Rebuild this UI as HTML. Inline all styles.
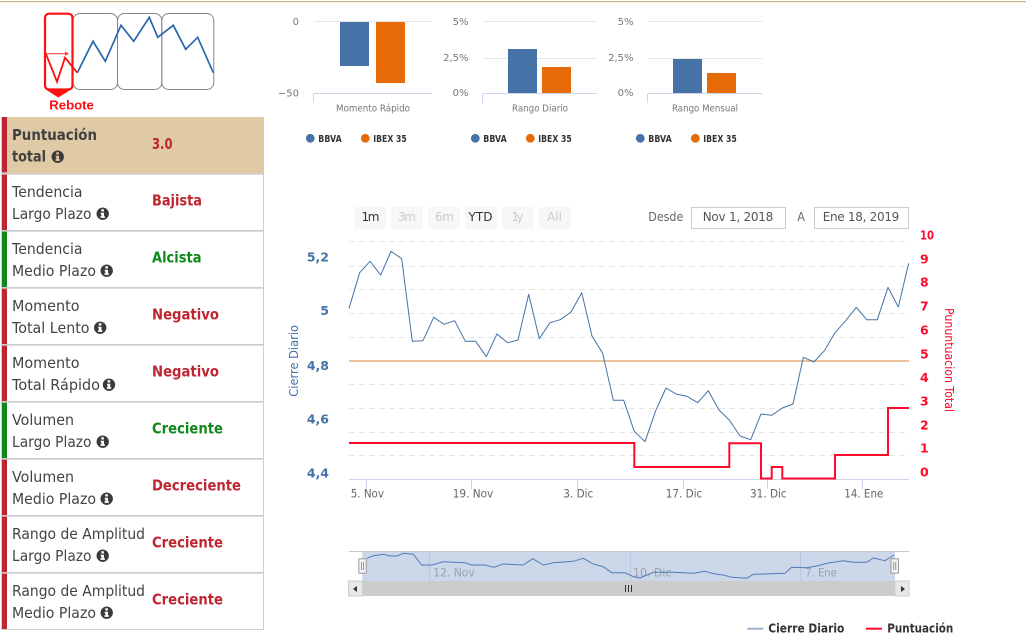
<!DOCTYPE html>
<html lang="es"><head><meta charset="utf-8"><title>Rebote</title>
<style>
html,body{margin:0;padding:0;background:#fff;width:1026px;height:643px;overflow:hidden}
svg{display:block}
text{font-family:"DejaVu Sans","Liberation Sans",sans-serif}
.r{font-size:15px;fill:#444}
.v{font-size:15.5px;font-weight:bold}
.red{fill:#bf2632}.grn{fill:#10891c}
.t{font-size:10px;fill:#666}
.c{font-size:10px;fill:#777}
.y{font-size:10px;fill:#777}
.l{font-size:10px;font-weight:bold;fill:#333}
.x{font-size:11.5px;fill:#666}
.b{font-size:12px}
.rx{font-size:12.5px;font-weight:bold;fill:#ff0a2a}
.lx{font-size:12.5px;font-weight:bold;fill:#4572a7}
</style></head><body>
<svg width="1026" height="643" viewBox="0 0 1026 643" xmlns="http://www.w3.org/2000/svg">
<defs>
<g id="i"><path fill="#3a3a3a" fill-rule="evenodd" d="M0-6.2a6.2 6.2 0 1 0 .01 0zM-1.4-4.4h2.6v2.2h-2.6zM-2-.9h3.3v3.5h.9v1.6h-4.4v-1.6h.9v-1.9h-.7z"/></g>
</defs>
<rect x="0" y="1" width="1026" height="1.2" fill="#c9b07e"/>

<!-- logo -->
<g fill="none" stroke="#858585" stroke-width="1">
<rect x="73" y="13.5" width="44.5" height="76" rx="7"/>
<rect x="117.5" y="13.5" width="44.3" height="76" rx="7"/>
<rect x="161.8" y="13.5" width="52" height="76" rx="7"/>
</g>
<polyline fill="none" stroke="#2a66ad" stroke-width="1.7" points="77.3,72.7 93,41.3 105.3,61.3 121,25.3 133.7,41.3 149.3,17.3 157.7,37.3 173.3,25.3 185.7,49.3 197.7,37.3 213.3,72.7"/>
<rect x="45" y="13.7" width="27.5" height="75.8" rx="4" fill="none" stroke="#ff0f0f" stroke-width="2.2"/>
<polygon points="45,89 72,89 58.3,97.5" fill="#ff0f0f"/>
<polyline fill="none" stroke="#ff0f0f" stroke-width="1.8" points="45.7,53.3 57,81.7 65,57.7 77.3,72.7"/>
<path d="M45.7 53.7H66" stroke="#ff3333" stroke-width="1"/><polygon points="65,51.6 69,53.7 65,55.8" fill="#ff3333"/>
<text x="49.3" y="109.5" style="font-family:'Liberation Sans',Arial,sans-serif;font-size:12.5px;font-weight:bold;fill:#ff0f0f" textLength="44.5" lengthAdjust="spacingAndGlyphs">Rebote</text>

<!-- table -->
<rect x="7" y="117" width="256.5" height="56.5" fill="#dfcaa5"/>
<g fill="#bf2632">
<rect x="2" y="117" width="5" height="55.5"/><rect x="2" y="174.5" width="5" height="55.5"/><rect x="2" y="288.5" width="5" height="55.5"/><rect x="2" y="345.5" width="5" height="55.5"/><rect x="2" y="459.5" width="5" height="55.5"/><rect x="2" y="516.5" width="5" height="55.5"/><rect x="2" y="573.5" width="5" height="55.5"/>
</g>
<g fill="#10891c"><rect x="2" y="231.5" width="5" height="55.5"/><rect x="2" y="402.5" width="5" height="55.5"/></g>
<g fill="#cccccc">
<rect x="1" y="173" width="263" height="1.7"/><rect x="1" y="230" width="263" height="1.7"/><rect x="1" y="287" width="263" height="1.7"/><rect x="1" y="344" width="263" height="1.7"/><rect x="1" y="401" width="263" height="1.7"/><rect x="1" y="458" width="263" height="1.7"/><rect x="1" y="515" width="263" height="1.7"/><rect x="1" y="572" width="263" height="1.7"/><rect x="1" y="629" width="263" height="1"/>
<rect x="263" y="117" width="1" height="513"/><rect x="1" y="117" width="1" height="513"/>
</g>

<text class="r" x="12" y="140" style="font-weight:bold;fill:#404040" textLength="85" lengthAdjust="spacingAndGlyphs">Puntuación</text>
<text class="r" x="12" y="161.7" style="font-weight:bold;fill:#404040" textLength="34" lengthAdjust="spacingAndGlyphs">total</text>
<use href="#i" x="57.7" y="156.7"/>
<text class="v red" x="152" y="149" textLength="20.5" lengthAdjust="spacingAndGlyphs">3.0</text>

<text class="r" x="12" y="197" textLength="70.5" lengthAdjust="spacingAndGlyphs">Tendencia</text>
<text class="r" x="12" y="219" textLength="79.5" lengthAdjust="spacingAndGlyphs">Largo Plazo</text>
<use href="#i" x="102.7" y="213.7"/>
<text class="v red" x="152" y="205.7" textLength="50" lengthAdjust="spacingAndGlyphs">Bajista</text>

<text class="r" x="12" y="254" textLength="70.5" lengthAdjust="spacingAndGlyphs">Tendencia</text>
<text class="r" x="12" y="276" textLength="84" lengthAdjust="spacingAndGlyphs">Medio Plazo</text>
<use href="#i" x="106.7" y="270.7"/>
<text class="v grn" x="152" y="262.7" textLength="49.5" lengthAdjust="spacingAndGlyphs">Alcista</text>

<text class="r" x="12" y="311" textLength="67.5" lengthAdjust="spacingAndGlyphs">Momento</text>
<text class="r" x="12" y="333" textLength="77.5" lengthAdjust="spacingAndGlyphs">Total Lento</text>
<use href="#i" x="100.2" y="327.7"/>
<text class="v red" x="152" y="319.7" textLength="67" lengthAdjust="spacingAndGlyphs">Negativo</text>

<text class="r" x="12" y="368" textLength="67.5" lengthAdjust="spacingAndGlyphs">Momento</text>
<text class="r" x="12" y="390" textLength="88" lengthAdjust="spacingAndGlyphs">Total Rápido</text>
<use href="#i" x="109" y="384.7"/>
<text class="v red" x="152" y="376.7" textLength="67" lengthAdjust="spacingAndGlyphs">Negativo</text>

<text class="r" x="12" y="425" textLength="62" lengthAdjust="spacingAndGlyphs">Volumen</text>
<text class="r" x="12" y="447" textLength="79.5" lengthAdjust="spacingAndGlyphs">Largo Plazo</text>
<use href="#i" x="102.7" y="441.7"/>
<text class="v grn" x="152" y="433.7" textLength="71" lengthAdjust="spacingAndGlyphs">Creciente</text>

<text class="r" x="12" y="482" textLength="62" lengthAdjust="spacingAndGlyphs">Volumen</text>
<text class="r" x="12" y="504" textLength="84" lengthAdjust="spacingAndGlyphs">Medio Plazo</text>
<use href="#i" x="106.7" y="498.7"/>
<text class="v red" x="152" y="490.7" textLength="89" lengthAdjust="spacingAndGlyphs">Decreciente</text>

<text class="r" x="12" y="539" textLength="133" lengthAdjust="spacingAndGlyphs">Rango de Amplitud</text>
<text class="r" x="12" y="561" textLength="79.5" lengthAdjust="spacingAndGlyphs">Largo Plazo</text>
<use href="#i" x="102.7" y="555.7"/>
<text class="v red" x="152" y="547.7" textLength="71" lengthAdjust="spacingAndGlyphs">Creciente</text>

<text class="r" x="12" y="596" textLength="133" lengthAdjust="spacingAndGlyphs">Rango de Amplitud</text>
<text class="r" x="12" y="618" textLength="84" lengthAdjust="spacingAndGlyphs">Medio Plazo</text>
<use href="#i" x="106.7" y="612.7"/>
<text class="v red" x="152" y="604.7" textLength="71" lengthAdjust="spacingAndGlyphs">Creciente</text>

<!-- mini charts -->
<g stroke="#e6e6e6" stroke-width="1">
<path d="M314 21.5H432M483 21.5H597M483 58.5H597M648 21.5H762M648 58.5H762"/>
</g>
<g stroke="#ccd6eb" stroke-width="1" fill="none">
<path d="M314 93.5H432M313.5 93.5V103M483 93.5H597M482.5 93.5V103M648 93.5H762M647.5 93.5V103"/>
</g>
<g fill="#4572a7">
<rect x="340" y="22" width="29" height="44"/><rect x="508" y="49" width="29" height="44"/><rect x="673" y="59" width="29" height="34"/>
<circle cx="310.3" cy="138.3" r="4.4"/><circle cx="475.3" cy="138.3" r="4.4"/><circle cx="640.3" cy="138.3" r="4.4"/>
</g>
<g fill="#e66a05">
<rect x="376" y="22" width="29" height="61"/><rect x="542" y="67" width="29" height="26"/><rect x="707" y="73" width="29" height="20"/>
<circle cx="365.3" cy="138.3" r="4.4"/><circle cx="530.3" cy="138.3" r="4.4"/><circle cx="695.3" cy="138.3" r="4.4"/>
</g>
<g class="y" text-anchor="end">
<text class="y" x="299" y="25">0</text><text class="y" x="299" y="96.5">−50</text>
<text class="y" x="468.5" y="25">5%</text><text class="y" x="468.5" y="61">2,5%</text><text class="y" x="468.5" y="96">0%</text>
<text class="y" x="633.5" y="25">5%</text><text class="y" x="633.5" y="61">2,5%</text><text class="y" x="633.5" y="96">0%</text>
</g>
<text class="c" x="336" y="111.5" textLength="74" lengthAdjust="spacingAndGlyphs">Momento Rápido</text>
<text class="c" x="512" y="111.5" textLength="56" lengthAdjust="spacingAndGlyphs">Rango Diario</text>
<text class="c" x="672" y="111.5" textLength="66" lengthAdjust="spacingAndGlyphs">Rango Mensual</text>
<text class="l" x="318.3" y="142" textLength="23.4" lengthAdjust="spacingAndGlyphs">BBVA</text>
<text class="l" x="373.3" y="142" textLength="33.4" lengthAdjust="spacingAndGlyphs">IBEX 35</text>
<text class="l" x="483.3" y="142" textLength="23.4" lengthAdjust="spacingAndGlyphs">BBVA</text>
<text class="l" x="538.3" y="142" textLength="33.4" lengthAdjust="spacingAndGlyphs">IBEX 35</text>
<text class="l" x="648.3" y="142" textLength="23.4" lengthAdjust="spacingAndGlyphs">BBVA</text>
<text class="l" x="703.3" y="142" textLength="33.4" lengthAdjust="spacingAndGlyphs">IBEX 35</text>

<!-- range selector -->
<g fill="#f7f7f7">
<rect x="354" y="207" width="32" height="22" rx="2"/><rect x="391" y="207" width="32" height="22" rx="2"/><rect x="428" y="207" width="32" height="22" rx="2"/><rect x="465" y="207" width="32" height="22" rx="2"/><rect x="502" y="207" width="32" height="22" rx="2"/><rect x="539" y="207" width="32" height="22" rx="2"/>
</g>
<text class="b" x="361.5" y="221" fill="#333" textLength="18" lengthAdjust="spacing">1m</text>
<text class="b" x="398" y="221" fill="#ccc" textLength="18" lengthAdjust="spacing">3m</text>
<text class="b" x="435" y="221" fill="#ccc" textLength="19" lengthAdjust="spacing">6m</text>
<text class="b" x="468.5" y="221" fill="#333" textLength="24" lengthAdjust="spacingAndGlyphs">YTD</text>
<text class="b" x="511.5" y="221" fill="#ccc" textLength="12" lengthAdjust="spacing">1y</text>
<text class="b" x="547" y="221" fill="#ccc" textLength="15" lengthAdjust="spacingAndGlyphs">All</text>
<text class="b" x="648.3" y="221" fill="#666" textLength="35" lengthAdjust="spacingAndGlyphs">Desde</text>
<rect x="691.5" y="207.5" width="94" height="21" fill="#fff" stroke="#ccc"/>
<text class="b" x="702.7" y="221" fill="#555" textLength="70.6" lengthAdjust="spacing">Nov 1, 2018</text>
<text class="b" x="797.3" y="221" fill="#666" textLength="7.7" lengthAdjust="spacingAndGlyphs">A</text>
<rect x="814.5" y="207.5" width="94" height="21" fill="#fff" stroke="#ccc"/>
<text class="b" x="822.7" y="221" fill="#555" textLength="76.6" lengthAdjust="spacing">Ene 18, 2019</text>

<!-- main chart grid -->
<path d="M349 241.5H909M349 266.5H909M349 289.5H909M349 313.5H909M349 337.5H909M349 384.5H909M349 408.5H909M349 432.5H909M349 455.5H909" stroke="#e6e6e6" stroke-width="1" stroke-dasharray="6 4" fill="none"/>
<path d="M349 479.5H909M366.5 479.5V489M471.5 479.5V489M577.5 479.5V489M683.5 479.5V489M767.5 479.5V489M862.5 479.5V489" stroke="#ccd6eb" stroke-width="1" fill="none"/>
<path d="M349 361H909" stroke="#ebb78c" stroke-width="1.8" fill="none"/>
<polyline fill="none" stroke="#4572a7" stroke-width="1" stroke-linejoin="round" points="349,308.3 359.7,272.7 370,261.3 380.7,275 391,251.3 401.7,258.7 412.3,341.3 423,340.7 433.7,317.3 444,324.3 454.7,320.7 465.3,341.3 475.7,341.3 486.3,356.7 497,334 507.7,342.7 518,340 528.7,294.3 539.3,338.7 550,322.7 560.3,319.7 571,312 581.7,292.7 592,336 602.7,353.3 613.3,400.3 623.7,400.3 634.3,431.3 645,441.7 655.7,410.7 666,388 676.7,394.3 687,396.3 697.7,402.7 708.3,390.7 719,410 729.3,420 740,436 750.7,439.7 761,414 771.7,415.3 782.3,408 793,404 803.3,357.3 814,362 824.7,350.3 835,332.7 845.7,320.7 856.3,307.3 866.7,319.7 877.3,319.7 888,287.3 898.3,307 908.7,263.3"/>
<polyline fill="none" stroke="#ff0a2a" stroke-width="2" points="349,443 634.3,443 634.3,467 729.3,467 729.3,443.3 761,443.3 761,478.5 771.7,478.5 771.7,467 782.3,467 782.3,478.5 835,478.5 835,455 888,455 888,408 909,408"/>

<!-- axes labels -->
<g text-anchor="end">
<text class="lx" x="329" y="261.3">5,2</text><text class="lx" x="329" y="315">5</text><text class="lx" x="329" y="370">4,8</text><text class="lx" x="329" y="423.3">4,6</text><text class="lx" x="329" y="477.3">4,4</text>
</g>
<text class="rx" x="920" y="239.3" textLength="14" lengthAdjust="spacingAndGlyphs">10</text>
<text class="rx" x="920" y="263.3">9</text><text class="rx" x="920" y="286.7">8</text><text class="rx" x="920" y="310.7">7</text><text class="rx" x="920" y="334.7">6</text><text class="rx" x="920" y="358.7">5</text><text class="rx" x="920" y="382">4</text><text class="rx" x="920" y="405.7">3</text><text class="rx" x="920" y="429.7">2</text><text class="rx" x="920" y="452.7">1</text><text class="rx" x="920" y="476.7">0</text>
<text transform="translate(298,396.7) rotate(-90)" style="font-size:12.5px;fill:#4572a7" textLength="71.7" lengthAdjust="spacingAndGlyphs">Cierre Diario</text>
<text transform="translate(945,308) rotate(90)" style="font-size:12.5px;fill:#ff0a2a" textLength="104" lengthAdjust="spacingAndGlyphs">Pununtuacion Total</text>
<text class="x" x="350.7" y="497.5" textLength="33.3" lengthAdjust="spacingAndGlyphs">5. Nov</text>
<text class="x" x="452.7" y="497.5" textLength="40.6" lengthAdjust="spacingAndGlyphs">19. Nov</text>
<text class="x" x="563.3" y="497.5" textLength="30" lengthAdjust="spacingAndGlyphs">3. Dic</text>
<text class="x" x="665.7" y="497.5" textLength="36.6" lengthAdjust="spacingAndGlyphs">17. Dic</text>
<text class="x" x="750" y="497.5" textLength="36.7" lengthAdjust="spacingAndGlyphs">31. Dic</text>
<text class="x" x="844.3" y="497.5" textLength="39" lengthAdjust="spacingAndGlyphs">14. Ene</text>

<!-- navigator -->
<rect x="362.3" y="551.7" width="532.7" height="29.3" fill="#cdd7ea"/>
<path d="M349 551.5H909" stroke="#c8c8c8" stroke-width="1"/>
<path d="M429.5 552V581M630.5 552V581M800.5 552V581" stroke="#bcc7dd" stroke-width="1"/>
<text class="x" x="433.3" y="576.7" style="fill:#9aa0b0" textLength="41.4" lengthAdjust="spacingAndGlyphs">12. Nov</text>
<text class="x" x="633" y="576.7" style="fill:#9aa0b0" textLength="38.5" lengthAdjust="spacingAndGlyphs">10. Dic</text>
<text class="x" x="805.3" y="576.7" style="fill:#9aa0b0" textLength="31.4" lengthAdjust="spacingAndGlyphs">7. Ene</text>
<polyline fill="none" stroke="#4f7cb4" stroke-width="1" stroke-linejoin="round" points="366.7,558.3 373.3,555.7 383.3,554.3 390,556 396.7,556 403.3,553.3 413.3,554.3 421.7,565 431.7,565 443.3,561.7 465,562.7 471.7,565 485,565 494,567.3 503.3,564 523.3,565 532.7,558.7 543.3,565 553.3,562.7 573.3,561.3 583.3,558.3 593.3,564 603.3,566.7 611.7,572.7 625,572.7 633.3,576.7 640,578 653.3,572.3 673.3,572.3 693.3,573.3 705,571.3 715,574 723.3,575 731.7,577.3 746.7,578.3 753.3,574.3 785,573.3 791.7,567.3 806.7,567.7 816.7,566 826.7,563.3 843.3,560.7 853.3,562.3 866.7,562.3 873.3,558 885,560.7 894,555"/>
<rect x="358.8" y="558.8" width="7.5" height="14.5" rx="1" fill="#f2f2f2" stroke="#999"/>
<path d="M361.5 562V570M363.5 562V570" stroke="#999" stroke-width="1"/>
<rect x="891" y="558.8" width="7.5" height="14.5" rx="1" fill="#f2f2f2" stroke="#999"/>
<path d="M893.7 562V570M895.7 562V570" stroke="#999" stroke-width="1"/>
<rect x="362" y="581" width="533" height="15" fill="#cccccc"/>
<rect x="348.5" y="581" width="14" height="15" fill="#e8e8e8" stroke="#ccc"/>
<rect x="895" y="581" width="14" height="15" fill="#e8e8e8" stroke="#ccc"/>
<polygon points="357,586 353,589 357,592" fill="#333"/>
<polygon points="901,586 905,589 901,592" fill="#333"/>
<path d="M625.5 585V592M628.5 585V592M631.5 585V592" stroke="#333" stroke-width="1"/>

<!-- legend -->
<path d="M747.3 628.7H763.3" stroke="#a0b4d2" stroke-width="2"/>
<path d="M866 628.7H882" stroke="#ff0a2a" stroke-width="2"/>
<text x="768.3" y="632.7" style="font-size:12px;font-weight:bold;fill:#333" textLength="76" lengthAdjust="spacingAndGlyphs">Cierre Diario</text>
<text x="887.3" y="632.7" style="font-size:12px;font-weight:bold;fill:#333" textLength="66" lengthAdjust="spacingAndGlyphs">Puntuación</text>
</svg>
</body></html>
